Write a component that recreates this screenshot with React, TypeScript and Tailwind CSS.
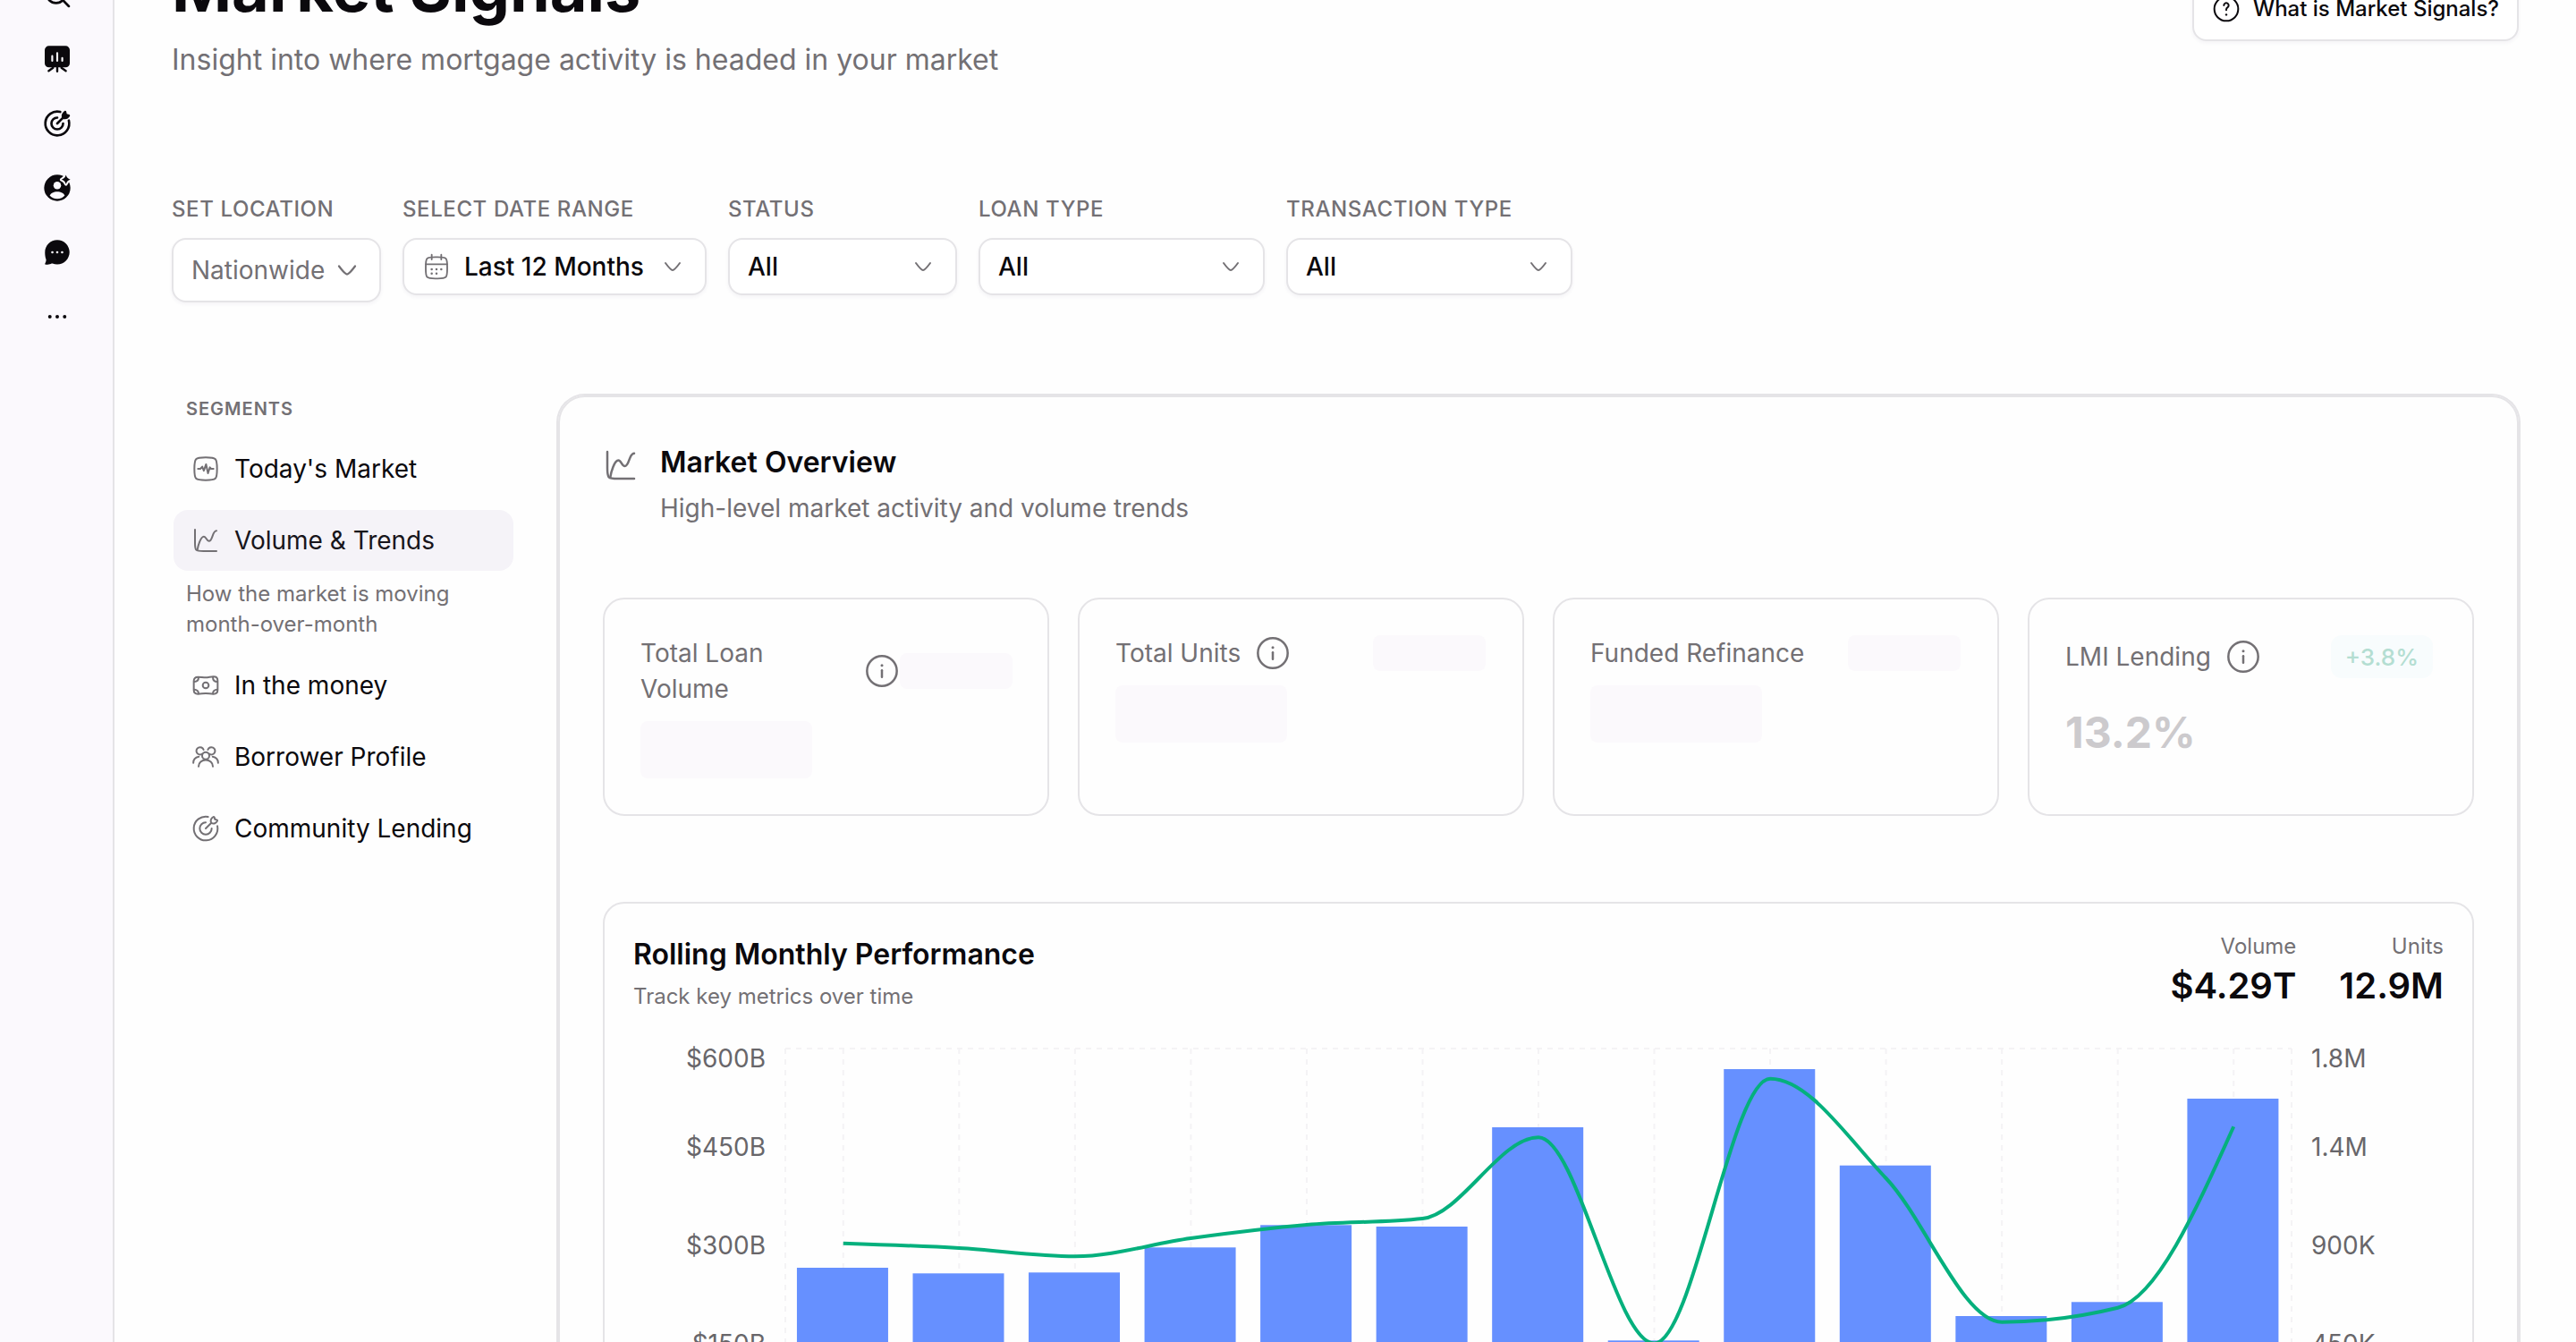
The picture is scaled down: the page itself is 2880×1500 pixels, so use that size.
import type { ReactNode } from 'react'

type IconProps = { className?: string; stroke?: number; children?: ReactNode }

function Icon({ className = 'size-8', stroke = 1.5, children }: IconProps) {
  return (
    <svg
      viewBox="0 0 24 24"
      fill="none"
      stroke="currentColor"
      strokeWidth={stroke}
      strokeLinecap="round"
      strokeLinejoin="round"
      className={`shrink-0 ${className}`}
    >
      {children}
    </svg>
  )
}

const ChevronIcon = ({ className }: IconProps) => (
  <Icon className={className}>
    <path d="M18 9s-4.42 6-6 6-6-6-6-6" />
  </Icon>
)

const InfoIcon = () => (
  <Icon className="size-10 text-[#737074]">
    <circle cx="12" cy="12" r="10" />
    <path d="M12 16v-4.5" />
    <path d="M12 8.2v.01" strokeWidth={1.8} />
  </Icon>
)

const HelpIcon = () => (
  <Icon>
    <circle cx="12" cy="12" r="10" />
    <path d="M10 9a2 2 0 1 1 3.2 1.6c-.7.5-1.2 1-1.2 1.9v.5" />
    <path d="M12 16.8v.01" strokeWidth={1.8} />
  </Icon>
)

const CalendarIcon = () => (
  <Icon className="size-8 text-[#737074]" stroke={1.4}>
    <path d="M16 2v4M8 2v4M3 10h18" />
    <path d="M13 4h-2C7.2 4 5.3 4 4.2 5.2 3 6.3 3 8.2 3 12v2c0 3.8 0 5.7 1.2 6.8C5.3 22 7.2 22 11 22h2c3.8 0 5.7 0 6.8-1.2C21 19.7 21 17.8 21 14v-2c0-3.800 0-5.700-1.200-6.800C18.700 4 16.800 4 13 4Z" />
    <path d="M8 14.2v.01M12 14.2v.01M16 14.2v.01M8 17.8v.01M12 17.8v.01" strokeWidth={1.9} />
  </Icon>
)

const TrendIcon = ({ className }: IconProps) => (
  <Icon className={className}>
    <path d="M21 21H10c-3.3 0-4.95 0-5.97-1.03C3 18.95 3 17.3 3 14V3" />
    <path d="M5 20C5.44 16.84 7.68 8.76 10.43 8.76c1.9 0 2.39 3.88 4.26 3.88C17.89 12.64 17.43 4 21 4" />
  </Icon>
)

const PulseIcon = () => (
  <Icon>
    <path d="M2.5 12c0-4.48 0-6.72 1.39-8.11C5.28 2.5 7.52 2.5 12 2.5s6.72 0 8.11 1.39C21.5 5.28 21.5 7.52 21.5 12s0 6.72-1.39 8.11C18.72 21.5 16.48 21.5 12 21.5s-6.72 0-8.11-1.39C2.5 18.72 2.5 16.48 2.5 12Z" />
    <path d="M5.5 12h2l1.6-1.8 1.3 3.4 1.9-5.4 1.6 7.6 1.6-5 1 1.2h2" />
  </Icon>
)

const MoneyIcon = () => (
  <Icon>
    <path d="M2 8.5C2 6 3 5 5.5 5c2.2 0 4.3.5 6.5.5s4.3-.8 6.5-.8C21 4.7 22 6 22 8v8c0 2-1 3.3-3.5 3.3-2.2 0-4.3-.6-6.5-.6s-4.3.6-6.5.6C3 19.3 2 18 2 16V8.5Z" />
    <circle cx="12" cy="12" r="2.5" />
    <path d="M2.3 9C4.5 9 6 7.5 6 5.3M21.7 9C19.5 9 18 7.5 18 5M2.3 15.5C4.5 15.5 6 17 6 19M21.7 15.5c-2.2 0-3.7 1.5-3.7 3.5" />
  </Icon>
)

const PeopleIcon = () => (
  <Icon>
    <circle cx="12" cy="11" r="3" />
    <path d="M6 20c0-3 2.6-5.4 6-5.4s6 2.4 6 5.4" />
    <path d="M9.2 9.4A3.1 3.1 0 1 1 10.2 6M14.8 9.4A3.1 3.1 0 1 0 13.8 6" />
    <path d="M1.6 17c0-2.6 1.8-4.6 4.6-5.2M22.4 17c0-2.6-1.8-4.6-4.6-5.2" />
  </Icon>
)

const TargetIcon = () => (
  <Icon>
    <path d="M17 12a5 5 0 1 1-5-5" />
    <path d="M14 2.2A10 10 0 1 0 21.8 10" />
    <path d="m12 12 4.7-4.7" />
    <path d="M16.7 7.3c-1.2-1.9-.2-3.9 1.7-4.9.4-.2.8 0 .9.4l.4 1.5 1.6.5c.4.1.6.5.4.9-1 1.9-3 2.8-5 1.6Z" />
  </Icon>
)

const railIcons: ReactNode[] = [
  <Icon key="search" stroke={2}>
    <circle cx="11" cy="11" r="8" />
    <path d="m17.3 17.3 4.4 4.4" />
  </Icon>,
  <Icon key="board" stroke={1.8}>
    <rect x="1.5" y="1" width="21" height="18" rx="3.5" fill="currentColor" stroke="none" />
    <path d="M12 19v3.3M8.5 19.3 4.8 22M15.5 19.3l3.7 2.7" />
    <path d="M7.800 9.500v4M12 7v6.500M16.200 11.200v2.300" stroke="#fbf9fd" strokeWidth={1.6} />
  </Icon>,
  <Icon key="target" stroke={2}>
    <path d="M14.5 2.3A10 10 0 1 0 21.7 9.5" />
    <path d="M16.9 12a4.9 4.9 0 1 1-4.9-4.9" />
    <path d="m12 12 5-5" />
    <path
      d="M16.2 7.8c-1.3-2.2-.2-4.9 2-6.3.6-.4 1.3-.1 1.4.6l.4 1.9 1.9.5c.7.2 1 .9.6 1.5-1.3 2.2-3.9 3.2-6.3 1.8Z"
      fill="currentColor"
      stroke="none"
    />
  </Icon>,
  <Icon key="user">
    <circle cx="12" cy="12" r="11" fill="currentColor" stroke="none" />
    <circle cx="12" cy="10" r="3.2" fill="#fbf9fd" stroke="none" />
    <path
      d="M5.7 18.4c.8-2.1 3.3-3.3 6.3-3.3s5.500 1.200 6.300 3.300C17 20 14.600 21.200 12 21.200S7 20 5.700 18.400Z"
      fill="#fbf9fd"
      stroke="none"
    />
    <path
      d="M19.3 1.2c.7 2.2 1.5 3 3.7 3.8-2.2.8-3 1.6-3.7 3.8-.7-2.2-1.5-3-3.7-3.8 2.2-.8 3-1.6 3.7-3.8Z"
      fill="currentColor"
      stroke="#fbf9fd"
      strokeWidth={2.8}
      className="[paint-order:stroke]"
    />
  </Icon>,
  <Icon key="chat">
    <path
      d="M12 1.6c5.7 0 10.3 4.6 10.3 10.3S17.7 22.2 12 22.2c-1.3 0-2.7-.3-4-.8-1 0-1.7.5-3.2.8-1 .2-2.3.2-2.8 0-.4-.2-.4-.7-.1-1.1.6-.9.9-2 .7-3.2C2 16.3 1.7 14.2 1.7 12 1.7 6.2 6.3 1.6 12 1.6Z"
      fill="currentColor"
      stroke="none"
    />
    <path d="M7.9 12v.01M12 12v.01M16.1 12v.01" stroke="#fbf9fd" strokeWidth={2} />
  </Icon>,
  <Icon key="more" stroke={3}>
    <path d="M5.8 12v.01M12 12v.01M18.2 12v.01" />
  </Icon>,
]

function Field({ label, children }: { label: string; children: ReactNode }) {
  return (
    <div className="flex flex-col gap-4">
      <span className="text-2xl leading-8 font-medium tracking-[0.025em] text-[#737074] uppercase">{label}</span>
      {children}
    </div>
  )
}

const selectBox =
  'flex items-center rounded-2xl border-2 border-[#e5e4e7] bg-white pl-5 text-[28px] shadow-[0_2px_4px_rgba(60,40,90,0.05)]'

function SelectAll({ width }: { width: string }) {
  return (
    <button className={`${selectBox} h-16 justify-between pr-5 font-medium ${width}`}>
      All
      <ChevronIcon className="size-8 text-[#737074]" />
    </button>
  )
}

function Segment({ icon, label, active }: { icon: ReactNode; label: string; active?: boolean }) {
  return (
    <a className={`flex h-[68px] items-center gap-4 rounded-2xl px-5 text-[28px] ${active ? 'bg-[#f5f3f8] text-[#18151b]' : ''}`}>
      <span className="text-[#737074]">{icon}</span>
      {label}
    </a>
  )
}

const Skeleton = ({ className }: { className: string }) => <div className={`shrink-0 rounded-lg bg-[#fbf9fc] ${className}`} />

type StatProps = { label: string; labelWidth?: string; info?: boolean; change?: string; value?: string }

function StatCard({ label, labelWidth = '', info = true, change, value }: StatProps) {
  return (
    <div className="min-w-0 rounded-3xl border-2 border-[#e5e4e7] p-10">
      <div className="flex items-center justify-between">
        <div className="flex items-center gap-4">
          <span className={`text-[28px] leading-10 text-[#737074] ${labelWidth}`}>{label}</span>
          {info && <InfoIcon />}
        </div>
        {change ? (
          <span className="mr-1 flex h-12 items-center rounded-xl bg-[#f8fcfd] px-4 text-[26px] font-medium text-[#b4ded2]">
            {change}
          </span>
        ) : (
          <Skeleton className="mr-px h-10 w-[126px]" />
        )}
      </div>
      {value ? (
        <p className="mt-8 text-5xl leading-[57px] font-bold text-[#cccacd]">{value}</p>
      ) : (
        <Skeleton className="mt-4 h-16 w-48" />
      )}
    </div>
  )
}

// plot area inside the chart svg
const LEFT = 170
const TOP = 42
const BOTTOM = 482
const PITCH = 1684 / 13

const volumeTops = [287, 293.3, 292.3, 264.3, 239.3, 241, 130, 368.3, 65, 172.7, 341, 325.3, 98]
const unitTops = [259.7, 265, 274.3, 254, 239, 232, 141.3, 371.5, 75.7, 187, 347.7, 331.7, 129.3]

const ticks = [
  { y: 63, left: '$600B', right: '1.8M' },
  { y: 162, left: '$450B', right: '1.4M' },
  { y: 272, left: '$300B', right: '900K' },
  { y: 382, left: '$150B', right: '450K' },
]

const centerX = (i: number) => LEFT + PITCH * (i + 0.5)

// monotone cubic through the points, evenly spaced on x
function monotonePath(ys: number[]) {
  const slopes = ys.slice(1).map((y, i) => (y - ys[i]) / PITCH)
  const last = ys.length - 1
  const t = ys.map((_, i) => {
    if (i === 0 || i === last) return 0
    const a = slopes[i - 1]
    const b = slopes[i]
    return (Math.sign(a) + Math.sign(b)) * Math.min(Math.abs(a), Math.abs(b), 0.5 * Math.abs((a + b) / 2))
  })
  t[0] = (3 * slopes[0] - t[1]) / 2
  t[last] = (3 * slopes[last - 1] - t[last - 1]) / 2
  const d = PITCH / 3
  return ys.slice(1).reduce((path, y, i) => {
    const x0 = centerX(i)
    const x1 = centerX(i + 1)
    return `${path}C${x0 + d},${ys[i] + d * t[i]} ${x1 - d},${y - d * t[i + 1]} ${x1},${y}`
  }, `M${centerX(0)},${ys[0]}`)
}

function PerformanceChart() {
  const right = LEFT + PITCH * 13
  const columns = [LEFT, ...volumeTops.map((_, i) => centerX(i)), right]
  return (
    <svg width="2024" height={BOTTOM} viewBox={`0 0 2024 ${BOTTOM}`} className="block">
      <g stroke="#f4f3f5" strokeWidth={2} strokeDasharray="6 6">
        <path d={`M${LEFT} ${TOP}H${right}`} />
        {columns.map((x) => (
          <path key={x} d={`M${x} ${TOP}V${BOTTOM}`} />
        ))}
      </g>
      {volumeTops.map((y, i) => (
        <rect key={i} x={LEFT + PITCH * i + 12.95} y={y} width={102} height={BOTTOM - y} fill="#6690ff" />
      ))}
      <path d={monotonePath(unitTops)} fill="none" stroke="#05b07d" strokeWidth={4} />
      <g fill="#68666a" fontSize={28}>
        {ticks.map((t) => (
          <g key={t.left}>
            <text x={148} y={t.y} textAnchor="end">{t.left}</text>
            <text x={1876} y={t.y}>{t.right}</text>
          </g>
        ))}
      </g>
    </svg>
  )
}

function Total({ label, value }: { label: string; value: string }) {
  return (
    <div className="text-right">
      <p className="text-2xl leading-8 text-[#737074]">{label}</p>
      <p className="text-[40px] leading-[56px] font-semibold">{value}</p>
    </div>
  )
}

export default function App() {
  return (
    <div className="flex h-[1500px] w-[2880px] overflow-hidden bg-[#fefefe] font-['Inter',sans-serif] text-[#0b090d]">
      <nav className="flex w-32 shrink-0 flex-col items-center border-r-2 border-[#e5e4e7] bg-[#fbf9fd] pl-0.5">
        <div className="-mt-[22px] flex flex-col gap-10">{railIcons}</div>
      </nav>

      <main className="-mt-[53px] flex-1 px-16">
        <header className="flex items-start justify-between">
          <div>
            <h1 className="text-7xl leading-[80px] font-bold">Market Signals</h1>
            <p className="mt-4 text-[32px] leading-[48px] text-[#737074]">
              Insight into where mortgage activity is headed in your market
            </p>
          </div>
          <button className="mt-[27px] flex h-[72px] items-center gap-3.5 rounded-2xl border-2 border-[#e5e4e7] bg-white px-5 text-2xl font-medium shadow-[0_2px_4px_rgba(60,40,90,0.05)]">
            <HelpIcon />
            What is Market Signals?
          </button>
        </header>

        <div className="mt-[127px] flex items-start gap-6">
          <Field label="Set location">
            <button className={`${selectBox} h-[72px] w-[234px] justify-between pr-[18px] text-[#737074]`}>
              Nationwide
              <ChevronIcon className="size-9" />
            </button>
          </Field>
          <Field label="Select date range">
            <button className={`${selectBox} h-16 w-[340px] pr-5 font-medium`}>
              <CalendarIcon />
              <span className="ml-[15px] flex-1 text-left">Last 12 Months</span>
              <ChevronIcon className="size-8 text-[#737074]" />
            </button>
          </Field>
          <Field label="Status">
            <SelectAll width="w-64" />
          </Field>
          <Field label="Loan type">
            <SelectAll width="w-80" />
          </Field>
          <Field label="Transaction type">
            <SelectAll width="w-80" />
          </Field>
        </div>

        <div className="mt-[104px] flex gap-12">
          <aside className="flex w-96 shrink-0 flex-col px-0.5">
            <h2 className="px-3.5 pt-px text-xl leading-7 font-semibold tracking-[0.05em] text-[#737074] uppercase">Segments</h2>
            <div className="mt-[19px] flex flex-col gap-3">
              <Segment icon={<PulseIcon />} label="Today's Market" />
              <div>
                <Segment icon={<TrendIcon />} label="Volume & Trends" active />
                <p className="mt-[9px] mb-[5px] w-[340px] px-3.5 text-2xl leading-[34px] text-[#737074]">
                  How the market is moving month-over-month
                </p>
              </div>
              <Segment icon={<MoneyIcon />} label="In the money" />
              <Segment icon={<PeopleIcon />} label="Borrower Profile" />
              <Segment icon={<TargetIcon />} label="Community Lending" />
            </div>
          </aside>

          <section className="min-w-0 flex-1 rounded-[30px] border-2 border-[#e5e4e7] p-12 ring-2 ring-[#e5e4e7]">
            <div className="flex items-start gap-6">
              <TrendIcon className="mt-2 size-10 text-[#737074]" />
              <div>
                <h2 className="pt-px text-[32px] leading-[48px] font-semibold">Market Overview</h2>
                <p className="mt-[7px] text-[28px] leading-10 text-[#737074]">High-level market activity and volume trends</p>
              </div>
            </div>

            <div className="mt-20 grid grid-cols-4 gap-8">
              <StatCard label="Total Loan Volume" labelWidth="w-[234px]" />
              <StatCard label="Total Units" />
              <StatCard label="Funded Refinance" info={false} />
              <StatCard label="LMI Lending" change="+3.8%" value="13.2%" />
            </div>

            <div className="mt-24 rounded-3xl border-2 border-[#e5e4e7] p-8">
              <div className="flex justify-between">
                <div>
                  <h3 className="pt-px text-[32px] leading-[48px] font-semibold">Rolling Monthly Performance</h3>
                  <p className="mt-[7px] text-2xl leading-8 text-[#737074]">Track key metrics over time</p>
                </div>
                <div className="flex h-[88px] gap-12">
                  <Total label="Volume" value="$4.29T" />
                  <Total label="Units" value="12.9M" />
                </div>
              </div>
              <PerformanceChart />
            </div>
          </section>
        </div>
      </main>
    </div>
  )
}
